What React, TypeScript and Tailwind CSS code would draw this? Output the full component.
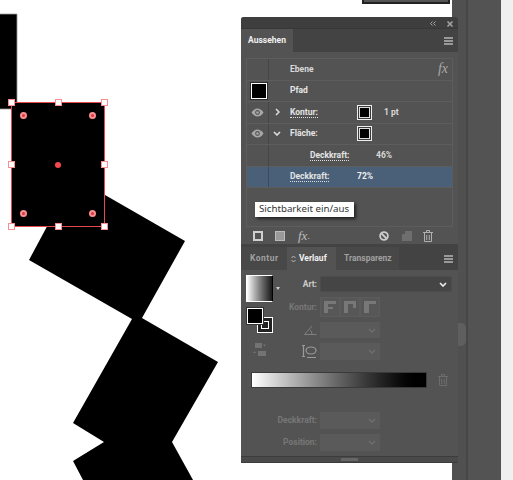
function Eye() {
  return (
    <svg width="13" height="9" viewBox="0 0 13 9" className="shrink-0">
      <path d="M0.5 4.5C2.5 1.5 4.5 0.5 6.5 0.5s4 1 6 4c-2 3-4 4-6 4s-4-1-6-4z" fill="#a8a8a8" />
      <circle cx="6.5" cy="4.5" r="2.4" fill="#555" />
      <circle cx="6.5" cy="4.5" r="1.3" fill="#a8a8a8" />
    </svg>
  );
}

function StrokeSwatch() {
  return (
    <div className="w-[15px] h-[15px] border border-[#eee] bg-[#3a3a3a] flex items-center justify-center shrink-0">
      <div className="w-[11px] h-[11px] border border-[#ddd] bg-black" />
    </div>
  );
}

function Row({ left, children, hi }: { left?: React.ReactNode; children?: React.ReactNode; hi?: boolean }) {
  return (
    <div className={`flex h-[21.5px] border-b border-[#5d5d5d] ${hi ? "bg-[#4a6079] border-[#4a6079]" : ""}`}>
      <div className="w-[21px] flex items-center justify-center">{left}</div>
      <div className={`w-[1px] ${hi ? "bg-[#3a4a5c]" : "bg-[#454545]"}`} />
      <div className="flex-1 flex items-center min-w-0">{children}</div>
    </div>
  );
}

function Dotted({ children }: { children: React.ReactNode }) {
  return <span className="font-bold text-[#e4e4e4] border-b border-dotted border-[#ddd] leading-[11px]">{children}</span>;
}

function Burger() {
  return (
    <div className="flex flex-col gap-[1px] w-[9px]">
      <div className="h-[2px] bg-[#999]" />
      <div className="h-[2px] bg-[#999]" />
      <div className="h-[2px] bg-[#999]" />
    </div>
  );
}

function Chevron({ c = "#6d6d6d" }: { c?: string }) {
  return (
    <svg width="8" height="5" viewBox="0 0 8 5">
      <path d="M1 1l3 3 3-3" fill="none" stroke={c} strokeWidth="1.6" />
    </svg>
  );
}

function Trash({ c = "#b0b0b0" }: { c?: string }) {
  return (
    <svg width="10" height="12" viewBox="0 0 10 12" className="block">
      <path d="M0 2.500h10M3.500 2.500V.5h3v2M1.500 2.500v9h7v-9M3.700 5v5M6.300 5v5" fill="none" stroke={c} strokeWidth="1" />
    </svg>
  );
}

function Select({ h = "h-[17px]" }: { h?: string }) {
  return (
    <div className={`w-[60px] ${h} bg-[#5a5a5a] flex items-center justify-end pr-[4px] shrink-0`}>
      <Chevron />
    </div>
  );
}

function Handle({ className }: { className: string }) {
  return <div className={`absolute w-[7px] h-[7px] bg-white border border-[#f58f92] ${className}`} />;
}

function Widget({ className }: { className: string }) {
  return (
    <div className={`absolute w-[7px] h-[7px] rounded-full border-2 border-[#f98f92] bg-[#d8383e] ${className}`} />
  );
}

export default function App() {
  return (
    <div className="relative w-[513px] h-[480px] bg-white overflow-hidden text-[8.5px] font-['Roboto',sans-serif]">
      {/* artwork */}
      <svg width="240" height="480" viewBox="0 0 240 480" className="absolute left-0 top-0">
        <polygon points="-3,14 17,14 17,109 -3,109" fill="#000" stroke="#999" strokeWidth="0.8" />
        <polygon points="73,178 105,195 185,241 142,318 218,362 172,442 193,480 83,480 73,461 104,442 73,423 132,319 29,260" fill="#000" />
      </svg>

      {/* selected rectangle */}
      <div className="absolute left-[11px] top-[102px] w-[94px] h-[125px] bg-black border border-[#e8474d]">
        <Handle className="left-[-4px] top-[-4px]" />
        <Handle className="left-[43px] top-[-4px]" />
        <Handle className="right-[-4px] top-[-4px]" />
        <Handle className="left-[-4px] top-[58px]" />
        <Handle className="right-[-4px] top-[58px]" />
        <Handle className="left-[-4px] bottom-[-4px]" />
        <Handle className="left-[43px] bottom-[-4px]" />
        <Handle className="right-[-4px] bottom-[-4px]" />
        <div className="absolute left-[43px] top-[59px] w-[6px] h-[6px] rounded-full bg-[#f5474d]" />
        <Widget className="left-[8px] top-[9px]" />
        <Widget className="right-[8px] top-[9px]" />
        <Widget className="left-[8px] bottom-[9px]" />
        <Widget className="right-[8px] bottom-[9px]" />
      </div>

      {/* box at the top */}
      <div className="absolute left-[362px] top-0 w-[88px] h-[4px] bg-[#555] border-b-2 border-x-2 border-[#222]" />

      {/* workspace right */}
      <div className="absolute left-[452px] top-0 h-[480px] w-[61px] flex">
        <div className="w-[14px] bg-[#505050]" />
        <div className="w-[2px] bg-[#474747]" />
        <div className="w-[33px] bg-[#535353]" />
        <div className="flex-1 bg-[#f0f0f0]" />
      </div>
      <div className="absolute left-[456px] top-[323px] w-[10px] h-[23px] rounded-r-[5px] bg-[#5f5f5f]" />

      {/* floating panel */}
      <div className="absolute left-[241px] top-[17px] w-[217px] h-[446px] bg-[#535353] rounded-t-[3px] flex flex-col">
        <div className="h-[12px] bg-[#3e3e3e] rounded-t-[3px] flex items-center justify-end pr-[5px] pt-[2px] shrink-0 border-b border-[#383838]">
          <svg width="6" height="5" viewBox="0 0 6 5">
            <path d="M2.500 .5L.5 2.500l2 2M5.500 .5l-2 2 2 2" fill="none" stroke="#a5a5a5" />
          </svg>
          <svg width="6" height="6" viewBox="0 0 6 6" className="ml-[11px]">
            <path d="M.5 .5l5 5M5.500 .5l-5 5" fill="none" stroke="#a5a5a5" strokeWidth="1.500" />
          </svg>
        </div>
        <div className="h-[23px] bg-[#434343] flex items-center shrink-0">
          <div className="w-[52px] h-full bg-[#535353] flex items-center justify-center font-bold text-[#f0f0f0]">Aussehen</div>
          <div className="flex-1" />
          <div className="pr-[5px]"><Burger /></div>
        </div>

        {/* Appearance list */}
        <div className="mx-[5px] mt-[6px] h-[169px] border border-[#5d5d5d] shrink-0 flex flex-col">
          <Row>
            <div className="ml-[21px] flex-1 font-bold text-[#d8d8d8]">Ebene</div>
            <span className="font-['Liberation_Serif'] italic text-[14px] text-[#a9a9a9] pr-[4px] leading-none">fx</span>
          </Row>
          <div className="flex h-[21.5px] border-b border-[#5d5d5d] items-center">
            <div className="w-[22px] flex justify-center pl-[1px] shrink-0">
              <div className="w-[16px] h-[16px] border border-white bg-black outline outline-[#2c2c2c]" />
            </div>
            <div className="ml-[21px] font-bold text-[#e6e6e6]">Pfad</div>
          </div>
          <Row left={<Eye />}>
            <span className="w-[16px] flex justify-center">
              <svg width="5" height="8" viewBox="0 0 5 8"><path d="M1 1l3 3-3 3" fill="none" stroke="#ddd" strokeWidth="1.5" /></svg>
            </span>
            <span className="ml-[5px] w-[67px]"><Dotted>Kontur:</Dotted></span>
            <StrokeSwatch />
            <span className="ml-[12px] font-bold text-[#d8d8d8]">1 pt</span>
          </Row>
          <Row left={<Eye />}>
            <span className="w-[16px] flex justify-center"><Chevron c="#ddd" /></span>
            <span className="ml-[5px] font-bold text-[#e4e4e4] w-[67px]">Fläche:</span>
            <StrokeSwatch />
          </Row>
          <Row>
            <span className="ml-[41px] w-[66px]"><Dotted>Deckkraft:</Dotted></span>
            <span className="font-bold text-[#d8d8d8]">46%</span>
          </Row>
          <Row hi>
            <span className="ml-[21px] w-[67px]"><Dotted>Deckkraft:</Dotted></span>
            <span className="font-bold text-[#f0f0f0]">72%</span>
          </Row>
        </div>

        {/* Toolbar */}
        <div className="h-[17px] mx-[5px] flex items-center shrink-0">
          <div className="w-[10px] h-[10px] border-2 border-[#d0d0d0] ml-[7px]" />
          <div className="w-[10px] h-[10px] border border-[#bbb] bg-[#999] ml-[12px]" />
          <span className="font-['Liberation_Serif'] italic text-[13px] text-[#bdbdbd] ml-[13px] leading-none">fx</span>
          <span className="text-[#bdbdbd] text-[8px] leading-none font-bold pt-[3px]">.</span>
          <div className="ml-auto flex items-center pr-[20px]">
            <svg width="10" height="10" viewBox="0 0 10 10">
              <circle cx="5" cy="5" r="3.9" fill="none" stroke="#ccc" strokeWidth="1.8" />
              <path d="M2.500 2.500l5 5" stroke="#ccc" strokeWidth="1.8" />
            </svg>
            <svg width="10" height="10" viewBox="0 0 10 10" className="ml-[13px]">
              <path d="M0 3h3V0h7v10H0z" fill="#6e6e6e" />
            </svg>
            <span className="ml-[11px]"><Trash /></span>
          </div>
        </div>

        {/* Second tab bar */}
        <div className="h-[26px] bg-[#434343] flex items-end shrink-0">
          <div className="w-[46px] h-[23px] pl-[9px] flex items-center font-bold text-[#a0a0a0] bg-[#484848] tracking-[0.5px]">Kontur</div>
          <div className="w-[49px] h-[23px] bg-[#535353] flex items-center pl-[4px] gap-[3px] font-bold text-[#f0f0f0]">
            <svg width="5" height="8" viewBox="0 0 5 8"><path d="M.5 3l2-2 2 2M.5 5l2 2 2-2" fill="none" stroke="#bbb" /></svg>
            Verlauf
          </div>
          <div className="w-[63px] h-[23px] pl-[8px] flex items-center font-bold text-[#a0a0a0] bg-[#484848]">Transparenz</div>
          <div className="flex-1" />
          <div className="pr-[5px] h-[23px] flex items-center"><Burger /></div>
        </div>

        {/* Gradient */}
        <div className="flex-1 min-h-0 flex flex-col">
          <div className="flex pl-[5px]">
            <div className="w-[41px] shrink-0 pt-[5px] flex flex-col">
              <div className="flex items-center">
                <div className="w-[27px] h-[27px] border border-white border-r-black bg-gradient-to-r from-white to-[#1a1a1a]" />
                <div className="ml-[3px] w-0 h-0 border-x-[2px] border-x-transparent border-t-[3px] border-t-[#ccc]" />
              </div>
              <div className="relative w-[26px] h-[25px] mt-[6px] ml-[1px]">
                <div className="absolute right-0 bottom-0 w-[16px] h-[16px] border border-white bg-[#222] flex items-center justify-center">
                  <div className="w-[8px] h-[8px] border border-white" />
                </div>
                <div className="absolute left-0 top-0 w-[16px] h-[16px] border border-white bg-black outline outline-[#333]" />
              </div>
              <svg width="14" height="13" viewBox="0 0 14 13" className="mt-[10px] ml-[7px]">
                <path d="M2 0h7v5H2zM5 8h8v5H5z" fill="#737373" />
                <path d="M10 1.500h3l-1.500 2zM0 10h3L1.500 8z" fill="#737373" />
              </svg>
            </div>
            <div className="flex flex-col pt-[6px]">
              <div className="flex items-center h-[16px]">
                <span className="font-bold text-[#ccc] w-[30px] text-right">Art:</span>
                <div className="w-[132px] h-full ml-[3px] bg-[#454545] border border-[#4c4c4c] rounded-[2px] flex items-center justify-end pr-[4px]">
                  <Chevron c="#f0f0f0" />
                </div>
              </div>
              <div className="flex items-center h-[20px] mt-[5px]">
                <span className="font-bold text-[#777] w-[30px] text-right">Kontur:</span>
                <div className="ml-[3px] flex">
                  {["M3 3h12v3H7v3h5v2H7v4H3z", "M3 3h12v7h-3V6H7v9H3z", "M3 3h12v3H8v9H3z"].map((d) => (
                    <div key={d} className="w-[20px] h-[20px] bg-[#575757] border border-[#5c5c5c] flex items-center justify-center">
                      <svg width="18" height="18" viewBox="0 0 18 18" className="shrink-0"><path d={d} fill="#787878" /></svg>
                    </div>
                  ))}
                </div>
              </div>
              <div className="flex items-center mt-[5px]">
                <div className="w-[30px] flex justify-end">
                  <svg width="13" height="10" viewBox="0 0 13 10"><path d="M.500 9.500L8 1M.500 9.500h12M6 5q2 1.500 2 4.500" fill="none" stroke="#808080" /></svg>
                </div>
                <div className="ml-[3px]"><Select h="h-[16px]" /></div>
              </div>
              <div className="flex items-center mt-[5px]">
                <div className="w-[30px] flex justify-end">
                  <svg width="16" height="13" viewBox="0 0 16 13"><ellipse cx="10" cy="5.500" rx="5" ry="3.500" fill="none" stroke="#9a9a9a" strokeWidth="1.200" /><path d="M1 .5h3M2.500 .5v11M1 11.500h3M6 12.500h9" stroke="#9a9a9a" strokeWidth="1.200" fill="none" /></svg>
                </div>
                <div className="ml-[3px]"><Select /></div>
              </div>
            </div>
          </div>

          {/* gradient bar */}
          <div className="flex items-center mt-[12px] ml-[10px]">
            <div className="w-[176px] h-[16px] border border-[#3a3a3a] bg-gradient-to-r from-white to-black" />
            <span className="ml-[11px]"><Trash c="#6d6d6d" /></span>
          </div>

          <div className="mt-[24px] flex flex-col gap-[5px] font-bold text-[#777]">
            <div className="flex items-center">
              <span className="w-[76px] text-right">Deckkraft:</span>
              <div className="ml-[3px]"><Select /></div>
            </div>
            <div className="flex items-center">
              <span className="w-[76px] text-right">Position:</span>
              <div className="ml-[3px]"><Select /></div>
            </div>
          </div>
        </div>

        {/* grip */}
        <div className="h-[7px] bg-[#4a4a4a] border-y border-[#3c3c3c] flex justify-center items-center shrink-0">
          <div className="w-[17px] h-[3px] bg-[#666]" />
        </div>
      </div>

      {/* tooltip */}
      <div className="absolute left-[255px] top-[202px] w-[99px] h-[15px] bg-white flex items-center pl-[4px] text-[#333] text-[9.7px] shadow-[2px_2px_3px_rgba(0,0,0,0.6)] font-['Noto_Sans'] whitespace-nowrap">
        Sichtbarkeit ein/aus
      </div>
    </div>
  );
}
